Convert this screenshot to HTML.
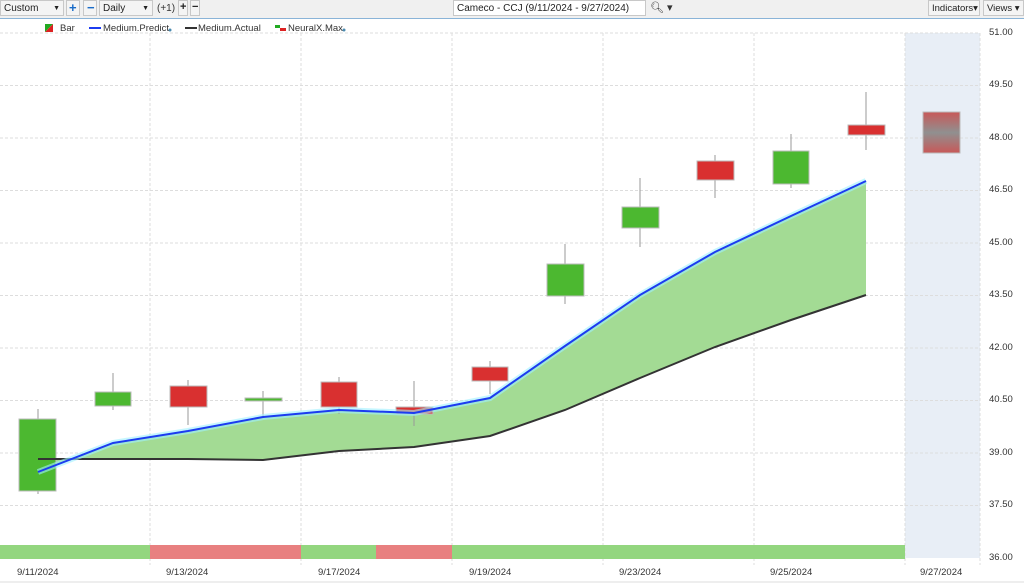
<!DOCTYPE html>
<html><head><style>
body{margin:0;width:1024px;height:584px;overflow:hidden;background:#fff;font-family:"Liberation Sans",sans-serif;position:relative}
.tb{position:absolute;left:0;top:0;width:1024px;height:18px;background:#f0f0f0;border-bottom:1px solid #8ab4d8}
.bx{position:absolute;top:0;border:1px solid #c8c8c8;background:#f4f4f4;font-size:10px;line-height:15px;padding-left:3px;box-sizing:border-box;height:16px;color:#222}
.t{position:absolute;font-size:9.5px;color:#333;white-space:nowrap}
</style></head><body>
<div class="tb"></div>
<div class="bx" style="left:0;width:64px">Custom<span style="position:absolute;right:3px;font-size:7px">▼</span></div>
<div class="bx" style="left:66px;width:14px;color:#1a6cc8;font-weight:bold;font-size:13px;padding-left:2px;line-height:14px">+</div>
<div class="bx" style="left:83px;width:14px;color:#1a6cc8;font-weight:bold;font-size:13px;padding-left:3px;line-height:13px">−</div>
<div class="bx" style="left:99px;width:54px">Daily<span style="position:absolute;right:3px;font-size:7px">▼</span></div>
<div class="t" style="left:157px;top:3px;font-size:10px">(+1)</div>
<div class="bx" style="left:178px;width:10px;font-weight:bold;padding-left:1px;font-size:11px;line-height:13px">+</div>
<div class="bx" style="left:190px;width:10px;font-weight:bold;padding-left:1px;font-size:11px;line-height:12px">−</div>
<div class="bx" style="left:453px;width:193px;background:#fff;font-size:10px">Cameco - CCJ (9/11/2024 - 9/27/2024)</div>
<div class="t" style="left:650px;top:1px;font-size:11px">🔍︎ ▾</div>
<div class="bx" style="left:928px;width:52px;font-size:9.5px">Indicators▾</div>
<div class="bx" style="left:983px;width:41px;font-size:9.5px">Views ▾</div>
<svg style="position:absolute;left:0;top:0" width="1024" height="584">
<defs><linearGradient id="g" x1="0" y1="0" x2="0" y2="1"><stop offset="0" stop-color="#c85858"/><stop offset=".5" stop-color="#909090"/><stop offset="1" stop-color="#c85858"/></linearGradient></defs>
<rect x="905" y="33" width="75" height="525" fill="#e8eef6"/>
<g stroke="#ddd" stroke-dasharray="3,2" stroke-width="1">
<line x1="0" y1="33" x2="980" y2="33"/><line x1="0" y1="85.5" x2="980" y2="85.5"/><line x1="0" y1="138" x2="980" y2="138"/><line x1="0" y1="190.5" x2="980" y2="190.5"/><line x1="0" y1="243" x2="980" y2="243"/><line x1="0" y1="295.5" x2="980" y2="295.5"/><line x1="0" y1="348" x2="980" y2="348"/><line x1="0" y1="400.5" x2="980" y2="400.5"/><line x1="0" y1="453" x2="980" y2="453"/><line x1="0" y1="505.5" x2="980" y2="505.5"/>
<line x1="150" y1="33" x2="150" y2="565"/><line x1="301" y1="33" x2="301" y2="565"/><line x1="452" y1="33" x2="452" y2="565"/><line x1="603" y1="33" x2="603" y2="565"/><line x1="754" y1="33" x2="754" y2="565"/><line x1="905" y1="33" x2="905" y2="565"/><line x1="980" y1="33" x2="980" y2="565"/>
</g>
<polygon fill="#a3db94" points="38,472 113,443 188,431 263,417 339,410 414,413 490,398 565,346 640,295 715,252 791,216 866,181 866,295 791,320 715,347 640,378 565,410 490,436 414,447 339,451 263,460 188,459 113,459 58,459"/>
<g stroke="#999" stroke-width="1">
<line x1="38" y1="409" x2="38" y2="494"/><line x1="113" y1="373" x2="113" y2="410"/><line x1="188" y1="380" x2="188" y2="425"/><line x1="263" y1="391" x2="263" y2="416"/><line x1="339" y1="377" x2="339" y2="414"/><line x1="414" y1="381" x2="414" y2="426"/><line x1="490" y1="361" x2="490" y2="394"/><line x1="565" y1="244" x2="565" y2="304"/><line x1="640" y1="178" x2="640" y2="247"/><line x1="715" y1="155" x2="715" y2="198"/><line x1="791" y1="134" x2="791" y2="188"/><line x1="866" y1="92" x2="866" y2="150"/>
</g>
<g stroke="#bbb" stroke-width="1">
<rect x="19" y="419" width="37" height="72" fill="#4cb830"/>
<rect x="95" y="392" width="36" height="14" fill="#4cb830"/>
<rect x="170" y="386" width="37" height="21" fill="#d93030"/>
<rect x="245" y="398" width="37" height="3" fill="#4cb830"/>
<rect x="321" y="382" width="36" height="25" fill="#d93030"/>
<rect x="396" y="407" width="37" height="7" fill="#d93030"/>
<rect x="472" y="367" width="36" height="14" fill="#d93030"/>
<rect x="547" y="264" width="37" height="32" fill="#4cb830"/>
<rect x="622" y="207" width="37" height="21" fill="#4cb830"/>
<rect x="697" y="161" width="37" height="19" fill="#d93030"/>
<rect x="773" y="151" width="36" height="33" fill="#4cb830"/>
<rect x="848" y="125" width="37" height="10" fill="#d93030"/>
<rect x="923" y="112" width="37" height="41" fill="url(#g)"/>
</g>
<polyline fill="none" stroke="#333" stroke-width="2" points="38,459 113,459 188,459 263,460 339,451 414,447 490,436 565,410 640,378 715,347 791,320 866,295"/>
<polyline fill="none" stroke="#9ef0ff" stroke-width="6" stroke-opacity=".6" points="38,472 113,443 188,431 263,417 339,410 414,413 490,398 565,346 640,295 715,252 791,216 866,181"/>
<polyline fill="none" stroke="#1c3cf0" stroke-width="2" points="38,472 113,443 188,431 263,417 339,410 414,413 490,398 565,346 640,295 715,252 791,216 866,181"/>
<rect x="0" y="545" width="150" height="14" fill="#93d67f"/><rect x="150" y="545" width="151" height="14" fill="#e88080"/><rect x="301" y="545" width="75" height="14" fill="#93d67f"/><rect x="376" y="545" width="76" height="14" fill="#e88080"/><rect x="452" y="545" width="453" height="14" fill="#93d67f"/>
<line x1="0" y1="582" x2="1024" y2="582" stroke="#ddd"/>
<polygon points="45,24 53,24 45,32" fill="#2a2"/><polygon points="53,24 53,32 45,32" fill="#d22"/>
<rect x="89" y="27" width="12" height="2" fill="#1c3cf0"/><rect x="185" y="27" width="12" height="2" fill="#333"/>
<rect x="275" y="25" width="5" height="3" fill="#2a2"/><rect x="280" y="28" width="6" height="3" fill="#d22"/>
<circle cx="170" cy="30" r="1.5" fill="#4a8ab0"/><circle cx="344" cy="30" r="1.5" fill="#4a8ab0"/>
</svg>
<div class="t" style="left:60px;top:23px">Bar</div>
<div class="t" style="left:103px;top:23px">Medium.Predict</div>
<div class="t" style="left:198px;top:23px">Medium.Actual</div>
<div class="t" style="left:288px;top:23px">NeuralX.Max</div>
<div class="t" style="left:989px;top:27px">51.00</div>
<div class="t" style="left:989px;top:79px">49.50</div>
<div class="t" style="left:989px;top:132px">48.00</div>
<div class="t" style="left:989px;top:184px">46.50</div>
<div class="t" style="left:989px;top:237px">45.00</div>
<div class="t" style="left:989px;top:289px">43.50</div>
<div class="t" style="left:989px;top:342px">42.00</div>
<div class="t" style="left:989px;top:394px">40.50</div>
<div class="t" style="left:989px;top:447px">39.00</div>
<div class="t" style="left:989px;top:499px">37.50</div>
<div class="t" style="left:989px;top:552px">36.00</div>
<div class="t" style="left:17px;top:567px">9/11/2024</div>
<div class="t" style="left:166px;top:567px">9/13/2024</div>
<div class="t" style="left:318px;top:567px">9/17/2024</div>
<div class="t" style="left:469px;top:567px">9/19/2024</div>
<div class="t" style="left:619px;top:567px">9/23/2024</div>
<div class="t" style="left:770px;top:567px">9/25/2024</div>
<div class="t" style="left:920px;top:567px">9/27/2024</div>
</body></html>
